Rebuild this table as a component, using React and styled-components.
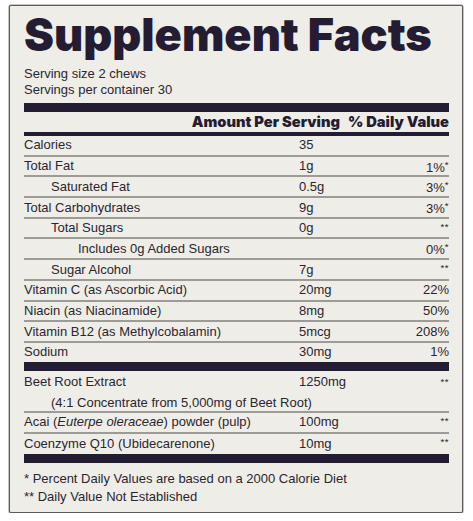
import React from "react";
import styled, { createGlobalStyle } from "styled-components";

const Global = createGlobalStyle`
  html, body { margin: 0; padding: 0; background: #ffffff; }
  body { font-family: "Liberation Sans", Arial, sans-serif; }
`;

const INK = "#241c32";
const TEXT = "#2b2631";
const RULE = "#9e9b96";

const Panel = styled.section`
  box-sizing: border-box;
  margin: 5px 0 0 9px;
  width: 454px;
  height: 508px;
  border: 1px solid #5d5c5a;
  border-radius: 2px;
  background: #efede7;
  padding: 3px 13px 0 14px;
  color: ${TEXT};
  font-family: "Liberation Sans", Arial, sans-serif;
  font-size: 13px;
  box-shadow: 0 0 0 0.5px #8a8986;
`;

const Title = styled.h1`
  margin: 0;
  font-family: Inter, "Liberation Sans", sans-serif;
  font-weight: 900;
  font-size: 45px;
  line-height: 52px;
  letter-spacing: 0px;
  color: ${INK};
  white-space: nowrap;
`;

const Serving = styled.div`
  margin-top: 5px;
  line-height: 16px;
`;

const Bar = styled.div`
  height: ${(p) => p.$h}px;
  background: ${INK};
  margin-top: ${(p) => p.$mt || 0}px;
`;

const HeadRow = styled.div`
  display: flex;
  justify-content: flex-end;
  gap: 8px;
  height: 20px;
  align-items: center;
  font-family: Inter, "Liberation Sans", sans-serif;
  font-weight: 900;
  font-size: 14.7px;
  color: ${INK};
`;

const Row = styled.div`
  box-sizing: border-box;
  display: grid;
  grid-template-columns: 275px 1fr auto;
  align-items: center;
  height: ${(p) => p.$h || 20.7}px;
  border-bottom: ${(p) => (p.$last ? "none" : `2px solid ${RULE}`)};
  line-height: 16px;
`;

const Name = styled.div`
  padding-left: ${(p) => (p.$indent || 0) * 27}px;
  white-space: nowrap;
`;

const Amt = styled.div`
  white-space: nowrap;
`;

const DV = styled.div`
  text-align: right;
  white-space: nowrap;
`;

const Star = styled.span`
  font-size: 9.5px;
  vertical-align: 4px;
  letter-spacing: 0.5px;
`;

const BeetRow = styled.div`
  box-sizing: border-box;
  height: 42px;
  border-bottom: 2px solid ${RULE};
`;

const BeetMain = styled.div`
  display: grid;
  grid-template-columns: 275px 1fr auto;
  line-height: 19px;
  padding-top: 1px;
`;

const BeetSub = styled.div`
  padding-left: 27px;
  line-height: 17px;
`;

const Footer = styled.div`
  padding-top: 7px;
  line-height: 18px;
`;

const rows = [
  { name: "Calories", amt: "35" },
  { name: "Total Fat", amt: "1g", dv: "1%", star: "*" },
  { name: "Saturated Fat", indent: 1, amt: "0.5g", dv: "3%", star: "*" },
  { name: "Total Carbohydrates", amt: "9g", dv: "3%", star: "*" },
  { name: "Total Sugars", indent: 1, amt: "0g", star: "**" },
  { name: "Includes 0g Added Sugars", indent: 2, dv: "0%", star: "*" },
  { name: "Sugar Alcohol", indent: 1, amt: "7g", star: "**" },
  { name: "Vitamin C (as Ascorbic Acid)", amt: "20mg", dv: "22%" },
  { name: "Niacin (as Niacinamide)", amt: "8mg", dv: "50%" },
  { name: "Vitamin B12 (as Methylcobalamin)", amt: "5mcg", dv: "208%" },
  { name: "Sodium", amt: "30mg", dv: "1%" },
];

export default function App() {
  return (
    <>
      <Global />
      <Panel>
        <Title>Supplement Facts</Title>
        <Serving>
          Serving size 2 chews
          <br />
          Servings per container 30
        </Serving>
        <Bar $h={9} $mt={5} />
        <HeadRow>
          <span>Amount Per Serving</span>
          <span>% Daily Value</span>
        </HeadRow>
        <Bar $h={4} />
        {rows.map((r, i) => (
          <Row key={r.name} $last={i === rows.length - 1} $h={i === rows.length - 1 ? 19 : 20.7}>
            <Name $indent={r.indent}>{r.name}</Name>
            <Amt>{r.amt || ""}</Amt>
            <DV>
              {r.dv || ""}
              {r.star ? <Star>{r.star}</Star> : null}
            </DV>
          </Row>
        ))}
        <Bar $h={9} />
        <BeetRow>
          <BeetMain>
            <span>Beet Root Extract</span>
            <span>1250mg</span>
            <DV>
              <Star>**</Star>
            </DV>
          </BeetMain>
          <BeetSub>(4:1 Concentrate from 5,000mg of Beet Root)</BeetSub>
        </BeetRow>
        <Row>
          <Name>
            Acai (<i>Euterpe oleraceae</i>) powder (pulp)
          </Name>
          <Amt>100mg</Amt>
          <DV>
            <Star>**</Star>
          </DV>
        </Row>
        <Row $last $h={20}>
          <Name>Coenzyme Q10 (Ubidecarenone)</Name>
          <Amt>10mg</Amt>
          <DV>
            <Star>**</Star>
          </DV>
        </Row>
        <Bar $h={9} />
        <Footer>
          * Percent Daily Values are based on a 2000 Calorie Diet
          <br />
          ** Daily Value Not Established
        </Footer>
      </Panel>
    </>
  );
}
